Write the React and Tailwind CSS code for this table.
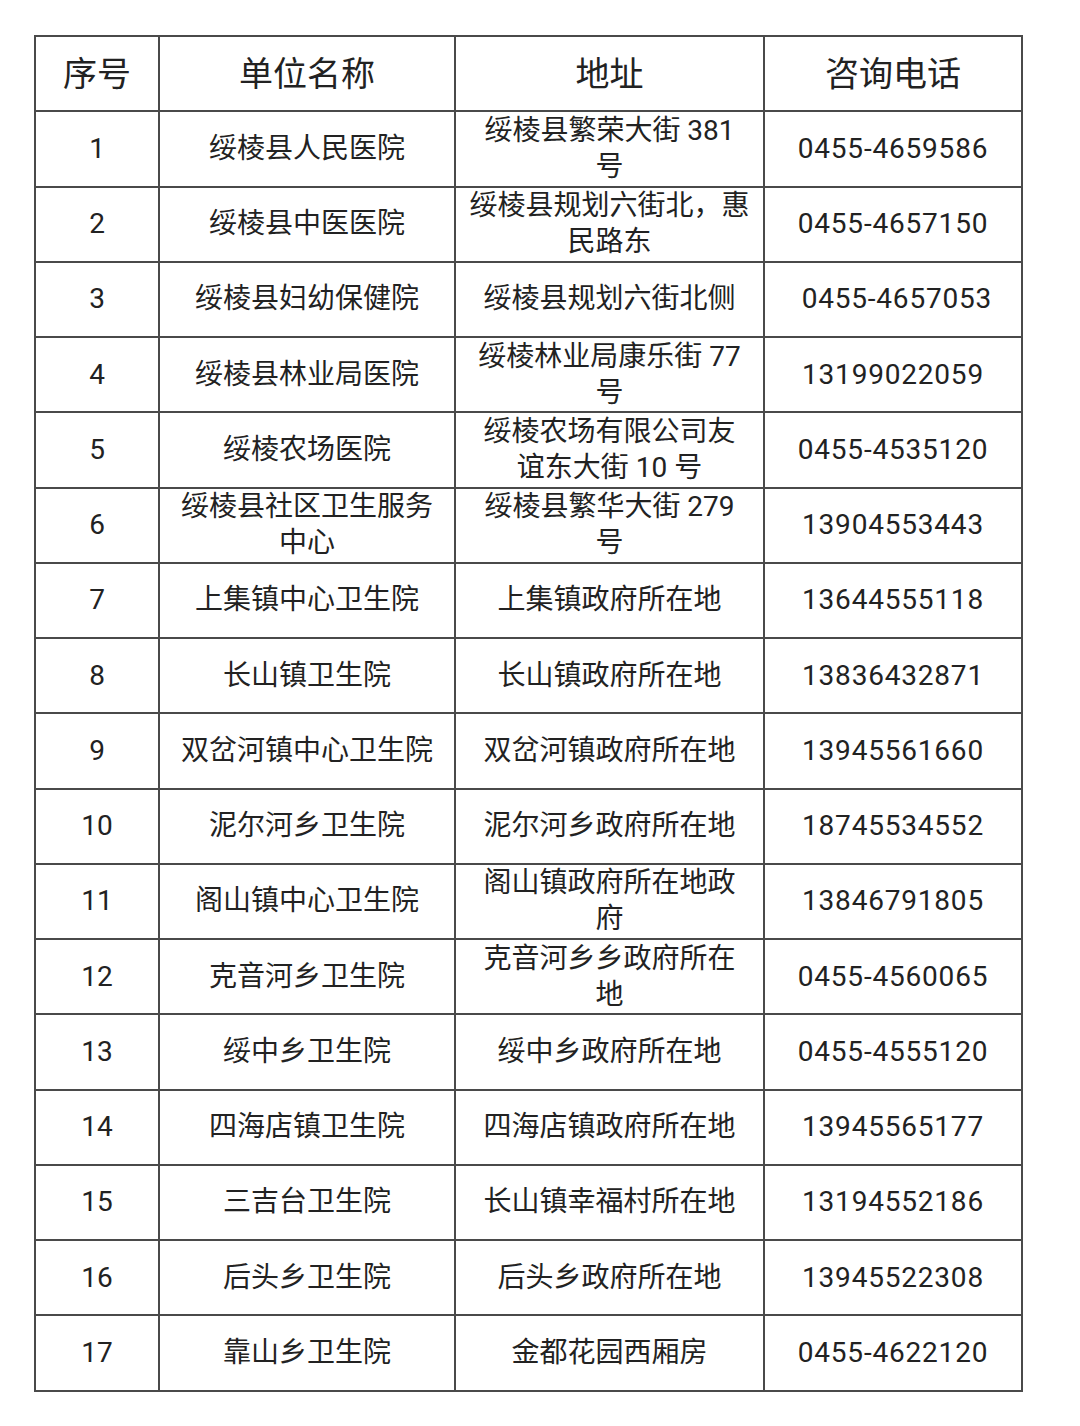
const rows = [
  ["1", ["绥棱县人民医院"], ["绥棱县繁荣大街 381", "号"], "0455-4659586"],
  ["2", ["绥棱县中医医院"], ["绥棱县规划六街北，惠", "民路东"], "0455-4657150"],
  ["3", ["绥棱县妇幼保健院"], ["绥棱县规划六街北侧"], "\u00a00455-4657053"],
  ["4", ["绥棱县林业局医院"], ["绥棱林业局康乐街 77", "号"], "13199022059"],
  ["5", ["绥棱农场医院"], ["绥棱农场有限公司友", "谊东大街 10 号"], "0455-4535120"],
  ["6", ["绥棱县社区卫生服务", "中心"], ["绥棱县繁华大街 279", "号"], "13904553443"],
  ["7", ["上集镇中心卫生院"], ["上集镇政府所在地"], "13644555118"],
  ["8", ["长山镇卫生院"], ["长山镇政府所在地"], "13836432871"],
  ["9", ["双岔河镇中心卫生院"], ["双岔河镇政府所在地"], "13945561660"],
  ["10", ["泥尔河乡卫生院"], ["泥尔河乡政府所在地"], "18745534552"],
  ["11", ["阁山镇中心卫生院"], ["阁山镇政府所在地政", "府"], "13846791805"],
  ["12", ["克音河乡卫生院"], ["克音河乡乡政府所在", "地"], "0455-4560065"],
  ["13", ["绥中乡卫生院"], ["绥中乡政府所在地"], "0455-4555120"],
  ["14", ["四海店镇卫生院"], ["四海店镇政府所在地"], "13945565177"],
  ["15", ["三吉台卫生院"], ["长山镇幸福村所在地"], "13194552186"],
  ["16", ["后头乡卫生院"], ["后头乡政府所在地"], "13945522308"],
  ["17", ["靠山乡卫生院"], ["金都花园西厢房"], "0455-4622120"],
];

function Lines({ lines }) {
  return lines.map((l, i) => (
    <div key={i} className="whitespace-nowrap">
      {l}
    </div>
  ));
}

export default function App() {
  return (
    <div
      className="w-[1080px] h-[1426px] bg-white pt-[35px] pl-[34px] text-[#222]"
      style={{ fontFamily: 'Roboto, "Noto Sans CJK SC", sans-serif' }}
    >
      <table className="border-collapse table-fixed w-[987px]">
        <colgroup>
          <col className="w-[124px]" />
          <col className="w-[296px]" />
          <col className="w-[309px]" />
          <col className="w-[258px]" />
        </colgroup>
        <thead>
          <tr className="h-[75.25px]">
            {["序号", "单位名称", "地址", "咨询电话"].map((h) => (
              <th
                key={h}
                className="border-2 border-[#4a4a4a] text-[34px] font-normal text-center align-middle leading-[40px] p-0"
              >
                {h}
              </th>
            ))}
          </tr>
        </thead>
        <tbody>
          {rows.map((r) => (
            <tr key={r[0]} className="h-[75.25px] text-[28px] leading-[36px]">
              <td className="border-2 border-[#4a4a4a] text-center align-middle p-0">{r[0]}</td>
              <td className="border-2 border-[#4a4a4a] text-center align-middle p-0">
                <Lines lines={r[1]} />
              </td>
              <td className="border-2 border-[#4a4a4a] text-center align-middle p-0">
                <Lines lines={r[2]} />
              </td>
              <td className="border-2 border-[#4a4a4a] text-center align-middle tracking-[0.8px] p-0">
                {r[3]}
              </td>
            </tr>
          ))}
        </tbody>
      </table>
    </div>
  );
}
